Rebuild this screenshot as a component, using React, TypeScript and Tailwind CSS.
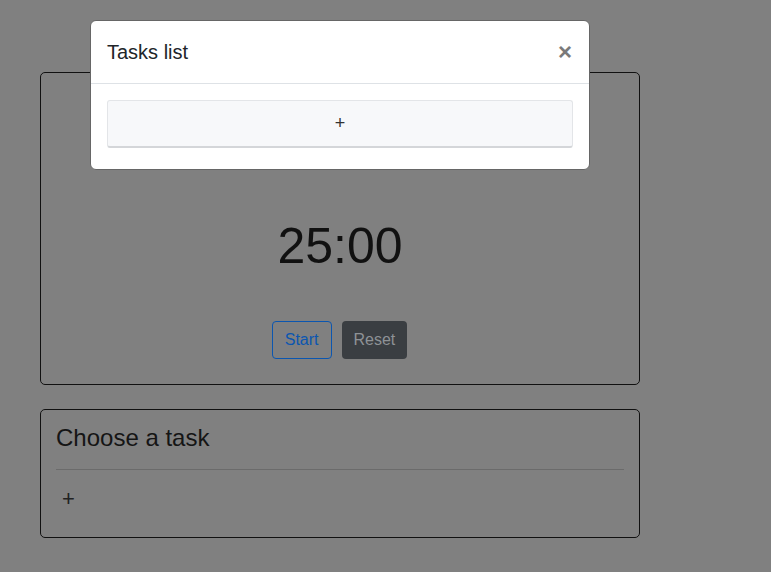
import React from 'react';

// Pomodoro page with the "Tasks list" modal open on top of it
const App: React.FC = () => {
    return (
        <div className="relative min-h-[572px] w-full bg-[#808080] text-[#111] font-['Liberation_Sans',Arial,sans-serif]">
            <div className="flex w-[600px] flex-col gap-[24px] pl-[40px] pt-[72px]">
                {/* Timer card */}
                <div className="flex h-[313px] w-[600px] flex-col items-center rounded-[5px] border border-[#111]">
                    <div className="mt-[148px] text-[50px] leading-none">25:00</div>
                    <div className="mt-[50px] flex gap-[10px] pr-[1px]">
                        <button className="h-[38px] rounded-[4px] border border-[#0b56b0] px-[12px] text-[16px] text-[#0b56b0]">
                            Start
                        </button>
                        <button className="h-[38px] rounded-[4px] bg-[#3a3e42] px-[12px] text-[16px] text-[#8e9296]">
                            Reset
                        </button>
                    </div>
                </div>

                {/* Task chooser card */}
                <div className="flex h-[129px] w-[600px] flex-col rounded-[5px] border border-[#111] px-[15px] pt-[13px]">
                    <h4 className="text-[24px] leading-[29px] text-[#151515]">Choose a task</h4>
                    <div className="mt-[17px] border-t border-[#6b6b6b]" />
                    <div className="pl-[6px] pt-[14px] text-[22px] leading-[30px] text-[#222]">+</div>
                </div>
            </div>

            {/* Modal */}
            <div className="absolute left-[90px] top-[20px] w-[500px] rounded-[6px] border border-[#666] bg-white text-[#212529]">
                <div className="flex h-[63px] items-center justify-between border-b border-[#dee2e6] px-[16px]">
                    <h5 className="text-[20px] leading-[30px]">Tasks list</h5>
                    <button className="pr-[1px] text-[24px] font-bold leading-none text-[#7a7a7a]">×</button>
                </div>
                <div className="p-[16px] pb-[21px]">
                    <button className="flex h-[48px] w-full items-center justify-center rounded-[3px] border border-[#e3e5e8] border-b-[#d4d6d9] border-b-2 bg-[#f7f8fa] text-[18px] text-[#333]">
                        +
                    </button>
                </div>
            </div>
        </div>
    );
};

export default App;
